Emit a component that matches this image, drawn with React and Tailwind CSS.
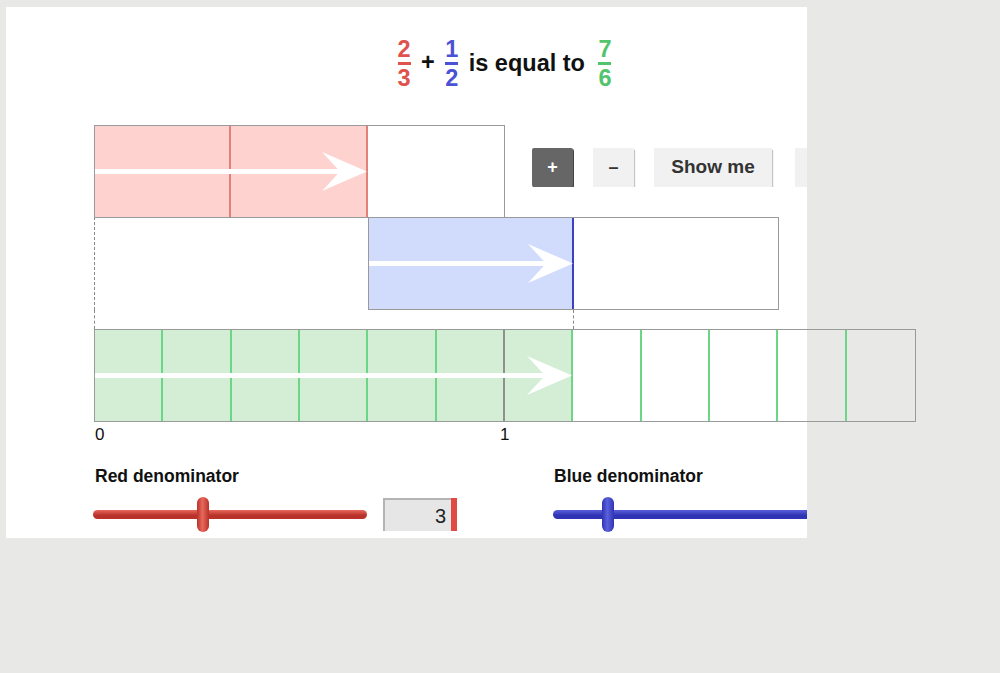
import React from 'react';

const RED = '#e0524c';
const BLUE = '#4c52d4';
const GREEN = '#52c46c';

const Fraction = ({ top, bottom, color }) => (
  <div className="flex flex-col items-center w-[14px]" style={{ color }}>
    <span className="leading-[22px]">{top}</span>
    <span className="w-[13px] h-[3px] my-[2px]" style={{ backgroundColor: color }} />
    <span className="leading-[22px]">{bottom}</span>
  </div>
);

const Arrow = ({ width }) => (
  <svg className="absolute left-0 top-0" width={width} height="91" viewBox={`0 0 ${width} 91`}>
    <rect x="0" y="43" width={width - 20} height="5" fill="#fff" />
    <polygon
      points={`${width - 1},45.5 ${width - 46},26 ${width - 28},45.5 ${width - 46},65`}
      fill="#fff"
    />
  </svg>
);

// one fraction bar: cells with coloured dividers, first `filled` cells shaded
const Bar = ({ width, cells, filled, fill, line, grayAt, className = '' }) => {
  const inner = width - 2;
  const cellW = inner / cells;
  return (
    <div className={`relative h-[93px] shrink-0 border border-[#9a9a9a] flex ${className}`} style={{ width }}>
      {Array.from({ length: cells }).map((_, i) => (
        <div
          key={i}
          className="h-full"
          style={{
            width: cellW,
            backgroundColor: i < filled ? fill : 'transparent',
            borderRight: i < cells - 1 ? `2px solid ${i + 1 === grayAt ? '#8f8f8f' : line}` : 'none',
          }}
        />
      ))}
      <Arrow width={Math.round(cellW * filled)} />
    </div>
  );
};

const Slider = ({ width, thumbAt, dark, light }) => (
  <div className="relative h-[35px] flex items-center shrink-0" style={{ width }}>
    <div
      className="w-full h-[9px] rounded-full"
      style={{ background: `linear-gradient(to bottom, ${light}, ${dark} 60%, ${dark})` }}
    />
    <div
      className="absolute top-0 w-[12px] h-[35px] rounded-full"
      style={{ left: thumbAt, background: `linear-gradient(to right, ${dark}, ${light} 45%, ${dark})` }}
    />
  </div>
);

export default function App() {
  return (
    <div
      className="w-[1000px] h-[673px] bg-[#e8e8e7] pt-[7px] pl-[6px] overflow-hidden"
      style={{ fontFamily: '"Liberation Sans", Arial, sans-serif' }}
    >
      <div className="w-[801px] h-[531px] bg-white flex flex-col">
        {/* title */}
        <div className="h-[118px] pb-[6px] pl-[391px] flex items-center gap-[10px] text-[23.5px] font-bold text-[#111] leading-none self-start">
          <Fraction top="2" bottom="3" color={RED} />
          <span>+</span>
          <Fraction top="1" bottom="2" color={BLUE} />
          <span className="mr-[3px] mt-[2px]">is equal to</span>
          <Fraction top="7" bottom="6" color={GREEN} />
        </div>

        {/* red bar + buttons */}
        <div className="flex items-start">
          <Bar width={411} cells={3} filled={2} fill="#fdd2cf" line="#e38078" className="ml-[88px]" />
          <div className="w-[302px] overflow-hidden">
            <div className="flex gap-[20px] pl-[27px] pt-[23px] w-[400px]">
              <button className="w-[41px] h-[39px] shrink-0 bg-[#666] rounded-[2px] text-white font-bold text-[18px] shadow-[1px_1px_0_#444]">
                +
              </button>
              <button className="w-[41px] h-[39px] shrink-0 bg-[#f1f1f1] text-[#333] font-bold text-[18px] shadow-[1px_2px_1px_#c4c4c4]">
                –
              </button>
              <button className="w-[118px] h-[39px] shrink-0 bg-[#f1f1f1] text-[#333] font-bold text-[19px] shadow-[1px_2px_1px_#c4c4c4]">
                Show me
              </button>
              <button className="w-[80px] h-[39px] shrink-0 ml-[3px] bg-[#f1f1f1] shadow-[1px_2px_1px_#c4c4c4]" />
            </div>
          </div>
        </div>

        {/* blue bar */}
        <div className="flex mt-[-1px] ml-[88px]">
          <div className="w-[274px] h-[93px] shrink-0 border-l border-dashed border-[#888]" />
          <Bar width={411} cells={2} filled={1} fill="#d1dcfd" line="#3b40c4" />
        </div>

        {/* dashed guides */}
        <div className="flex ml-[88px] h-[19px]">
          <div className="w-[479px] h-full border-l border-dashed border-[#888]" />
          <div className="h-full border-l border-dashed border-[#888]" />
        </div>

        {/* green bar */}
        <Bar width={822} cells={12} filled={7} fill="#d3eed5" line="#6cd686" grayAt={6} className="ml-[88px]" />

        {/* ticks */}
        <div className="flex ml-[88px] mt-[3px] text-[17px] text-[#111] leading-[20px]">
          <span className="w-[406px] pl-[1px]">0</span>
          <span>1</span>
        </div>

        {/* slider labels */}
        <div className="flex ml-[89px] mt-[21px] text-[17.5px] font-bold text-[#111] leading-[20px]">
          <span className="w-[459px]">Red denominator</span>
          <span>Blue denominator</span>
        </div>

        {/* sliders */}
        <div className="flex items-center ml-[87px] mt-[11px] w-[714px] overflow-hidden">
          <Slider width={274} thumbAt={104} dark="#b8322a" light="#e8685c" />
          <div className="ml-[16px] shrink-0 w-[68px] h-[33px] bg-[#e6e6e6] border-t-2 border-l-2 border-[#b4b4b4] flex items-center justify-end pr-[5px] text-[20px] text-[#222]">
            3
          </div>
          <div className="w-[6px] h-[33px] shrink-0 bg-[#e04a42]" />
          <div className="ml-[96px] shrink-0">
            <Slider width={300} thumbAt={49} dark="#2f34b4" light="#5a60dc" />
          </div>
        </div>
      </div>
    </div>
  );
}
